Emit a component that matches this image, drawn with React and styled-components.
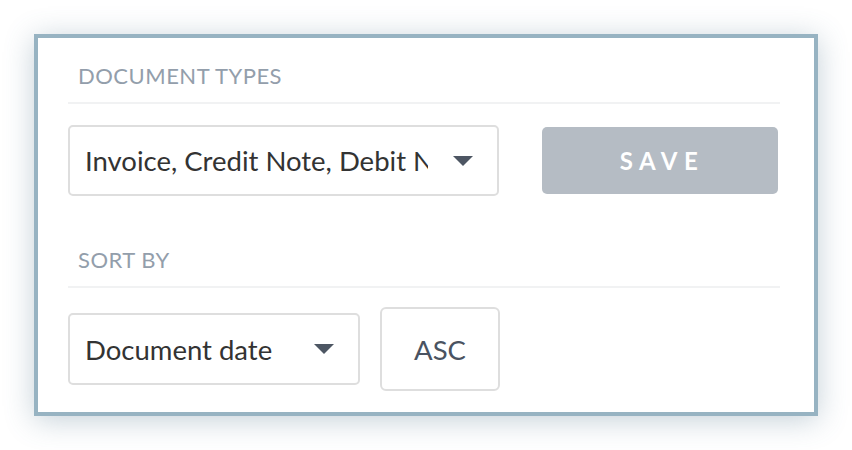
import React from "react";
import styled, { createGlobalStyle } from "styled-components";

const GlobalStyle = createGlobalStyle`
  html, body {
    margin: 0;
    padding: 0;
    background: #ffffff;
  }
  body {
    font-family: Lato, "Open Sans", sans-serif;
  }
  * {
    box-sizing: border-box;
  }
`;

const Page = styled.div`
  width: 852px;
  height: 450px;
  padding: 34px;
`;

const Panel = styled.div`
  width: 784px;
  height: 382px;
  background: #ffffff;
  border: 4px solid #97b3c2;
  box-shadow: 0 4px 28px rgba(70, 110, 135, 0.32);
  padding: 0 34px 0 30px;
`;

const SectionTitle = styled.div`
  padding: ${(p) => p.top}px 0 13px 10px;
  font-size: 22px;
  line-height: 26px;
  color: #939eab;
  border-bottom: 2px solid #f1f2f3;
  letter-spacing: 0.5px;
`;

const Row = styled.div`
  display: flex;
  align-items: center;
  gap: ${(p) => p.gap}px;
  margin-top: ${(p) => p.top}px;
`;

const Select = styled.div`
  width: ${(p) => p.w}px;
  height: ${(p) => p.h}px;
  border: 2px solid #dedede;
  border-radius: 5px;
  display: flex;
  align-items: center;
  padding: 0 24px 0 15px;
  gap: 25px;
`;

// the reference clips the long value at the select's edge
const SelectText = styled.span`
  flex: 1;
  min-width: 0;
  overflow: hidden;
  white-space: nowrap;
  font-size: 27.5px;
  color: #333333;
`;

const Caret = styled.span`
  width: 0;
  height: 0;
  border-left: 10px solid transparent;
  border-right: 10px solid transparent;
  border-top: 10px solid #4d5663;
  flex-shrink: 0;
`;

const SaveButton = styled.button`
  width: 236px;
  height: 67px;
  border: none;
  border-radius: 5px;
  background: #b5bcc4;
  color: #ffffff;
  font-family: Lato, sans-serif;
  font-weight: 700;
  font-size: 24px;
  letter-spacing: 6.5px;
  padding: 0 0 0 4px;
  cursor: pointer;
`;

const OrderButton = styled.button`
  width: 120px;
  height: 84px;
  border: 2px solid #dedede;
  border-radius: 6px;
  background: #ffffff;
  color: #4a5361;
  font-family: Lato, sans-serif;
  font-size: 27.5px;
  cursor: pointer;
`;

export default function App() {
  return (
    <>
      <GlobalStyle />
      <Page>
        <Panel>
          <SectionTitle top={25}>DOCUMENT TYPES</SectionTitle>
          <Row gap={43} top={21}>
            <Select w={431} h={71}>
              <SelectText>Invoice, Credit Note, Debit Note</SelectText>
              <Caret />
            </Select>
            <SaveButton>SAVE</SaveButton>
          </Row>
          <SectionTitle top={51}>SORT BY</SectionTitle>
          <Row gap={20} top={19}>
            <Select w={292} h={72}>
              <SelectText>Document date</SelectText>
              <Caret />
            </Select>
            <OrderButton>ASC</OrderButton>
          </Row>
        </Panel>
      </Page>
    </>
  );
}
